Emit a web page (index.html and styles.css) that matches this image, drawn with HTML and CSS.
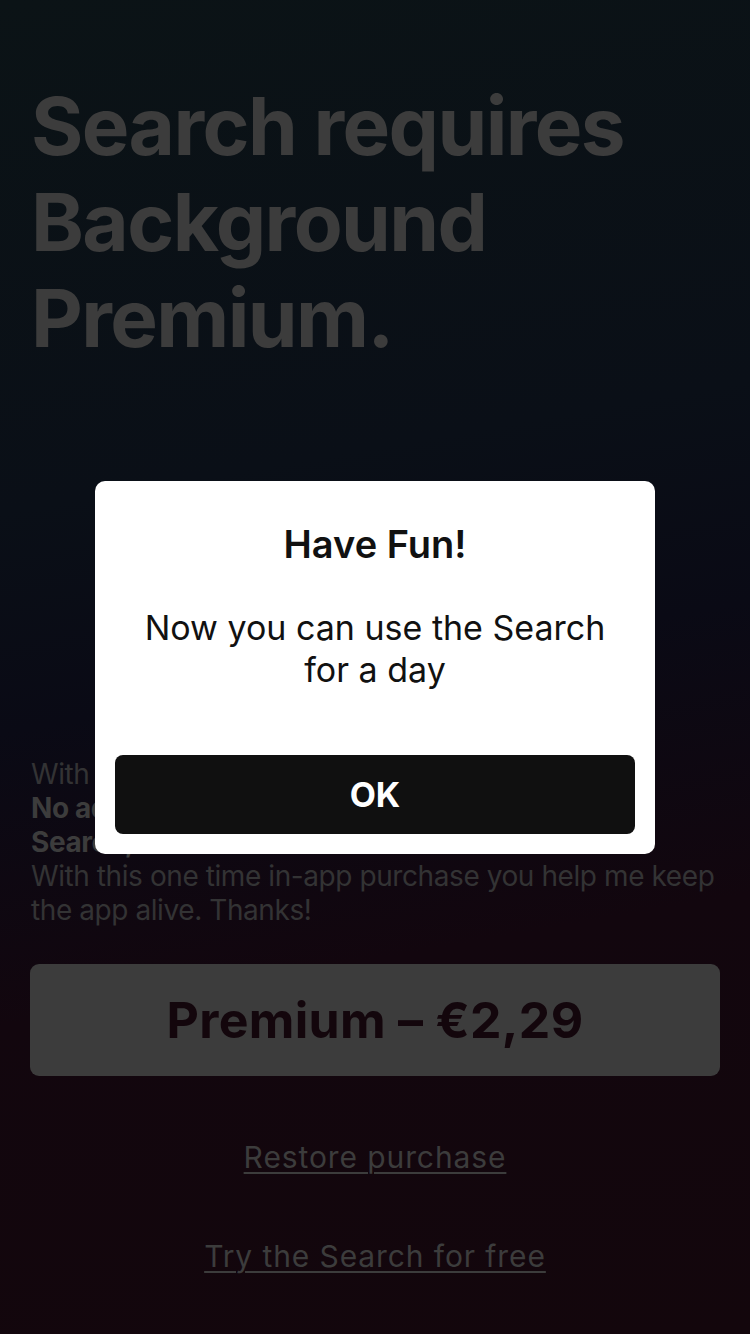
FILE: index.html
```html
<!DOCTYPE html>
<html lang="en">
<head>
<meta charset="utf-8">
<title>Search requires Background Premium</title>
<link rel="stylesheet" href="styles.css">
</head>
<body>
<main class="page">
  <h1 class="title">Search requires Background Premium.</h1>
  <div class="spacer"></div>
  <p class="info">
    <span class="line">With Premium you get:</span>
    <strong class="line">No ads and unlimited</strong>
    <strong class="line">Search, forever.</strong>
    <span>With this one time in-app purchase you help me keep the app alive. Thanks!</span>
  </p>
  <button class="buy">Premium – €2,29</button>
  <a class="link restore" href="#">Restore purchase</a>
  <a class="link try" href="#">Try the Search for free</a>
</main>
<div class="backdrop">
  <div class="dialog" role="alertdialog">
    <h2 class="dialog-title">Have Fun!</h2>
    <p class="dialog-msg">Now you can use the Search for a day</p>
    <button class="ok">OK</button>
  </div>
</div>
</body>
</html>
```
FILE: styles.css
```css
html, body {
  margin: 0;
  padding: 0;
  height: 100%;
}
body {
  font-family: Inter, "Noto Sans", sans-serif;
  background: linear-gradient(170deg, #0b1316 0%, #0a0f17 35%, #0a0a15 50%, #12060e 70%, #13060c 100%);
  min-height: 1334px;
  overflow: hidden;
}
.page {
  display: flex;
  flex-direction: column;
  padding: 78px 30px 0 30px;
  box-sizing: border-box;
  height: 1334px;
}
.title {
  margin: 0;
  padding-left: 1px;
  font-size: 80px;
  line-height: 96px;
  font-weight: 700;
  letter-spacing: -1.6px;
  color: #3c3c3c;
  width: 640px;
}
.spacer {
  height: 391px;
}
.info {
  margin: 0;
  padding-left: 1px;
  font-size: 28px;
  line-height: 34px;
  color: #333334;
  letter-spacing: -0.42px;
}
.info .line {
  display: block;
}
.info strong {
  color: #3c3c3c;
  font-weight: 700;
}
.buy {
  margin-top: 37px;
  height: 112px;
  border: none;
  border-radius: 9px;
  background: #3c3c3c;
  color: #13060c;
  font-family: inherit;
  font-size: 50px;
  font-weight: 700;
  letter-spacing: 0.3px;
}
.link {
  align-self: center;
  color: #3c3c3c;
  font-size: 30px;
  line-height: 36px;
  letter-spacing: 0.9px;
  text-decoration: underline;
  text-underline-offset: 4px;
  text-decoration-thickness: 2px;
}
.restore {
  margin-top: 63px;
}
.try {
  margin-top: 63px;
}
.backdrop {
  position: fixed;
  inset: 0;
  display: flex;
  align-items: center;
  justify-content: center;
}
.dialog {
  width: 560px;
  height: 373px;
  box-sizing: border-box;
  background: #ffffff;
  border-radius: 10px;
  padding: 40px 20px 20px;
  display: flex;
  flex-direction: column;
  align-items: center;
}
.dialog-title {
  margin: 0;
  font-size: 38px;
  line-height: 46px;
  font-weight: 600;
  color: #111;
}
.dialog-msg {
  margin: 40px 0 0;
  font-size: 34px;
  line-height: 42px;
  color: #111;
  text-align: center;
  width: 480px;
}
.ok {
  margin-top: auto;
  width: 520px;
  height: 79px;
  border: none;
  border-radius: 8px;
  background: #101010;
  color: #fff;
  font-family: inherit;
  font-size: 34px;
  font-weight: 700;
}
```
